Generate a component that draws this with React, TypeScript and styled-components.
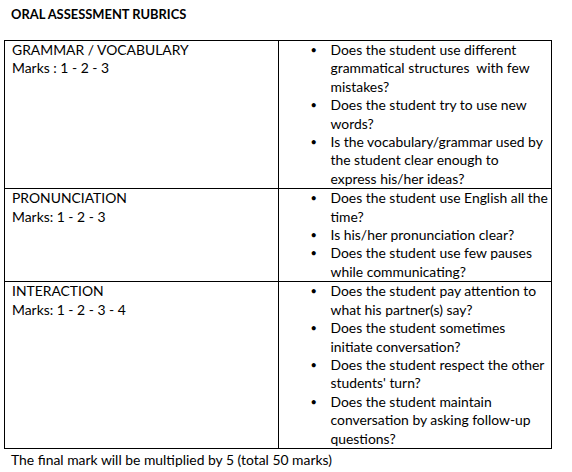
import * as React from "react"
import styled, { createGlobalStyle } from "styled-components"

const GlobalStyle = createGlobalStyle`
  body {
    margin: 0;
    background: #ffffff;
    color: #000000;
    font-family: Lato, "Open Sans", sans-serif;
  }
`

const Page = styled.div`
  padding: 6px 20px 0 4px;
  font-size: 13.9px;
`

const Title = styled.h1`
  margin: 0 0 18px 7px;
  font-size: 12.9px;
  font-weight: 700;
  line-height: 16px;
`

const Table = styled.table`
  width: 548px;
  border-collapse: collapse;
  table-layout: fixed;
`

const Cell = styled.td`
  border: 1px solid #000;
  vertical-align: top;
  padding: 0 4px 0 7px;
  line-height: 18.4px;
`

const Criteria = styled.ul`
  margin: 0;
  padding: 0 0 0 45px;
  list-style: none;
`

const Item = styled.li`
  position: relative;

  &::before {
    content: "•";
    position: absolute;
    left: -20px;
    font-size: 11px;
  }
`

// lines are kept as in the printed rubric
const Line = styled.span`
  display: block;
  white-space: pre;
`

const Footer = styled.p`
  margin: 2px 0 0 7px;
  line-height: 18px;
`

const rubric = [
  {
    name: "GRAMMAR / VOCABULARY",
    marks: "Marks : 1 - 2 - 3",
    questions: [
      ["Does the student use different", "grammatical structures  with few", "mistakes?"],
      ["Does the student try to use new", "words?"],
      ["Is the vocabulary/grammar used by", "the student clear enough to", "express his/her ideas?"],
    ],
  },
  {
    name: "PRONUNCIATION",
    marks: "Marks: 1 - 2 - 3",
    questions: [
      ["Does the student use English all the", "time?"],
      ["Is his/her pronunciation clear?"],
      ["Does the student use few pauses", "while communicating?"],
    ],
  },
  {
    name: "INTERACTION",
    marks: "Marks: 1 - 2 - 3 - 4",
    questions: [
      ["Does the student pay attention to", "what his partner(s) say?"],
      ["Does the student sometimes", "initiate conversation?"],
      ["Does the student respect the other", "students' turn?"],
      ["Does the student maintain", "conversation by asking follow-up", "questions?"],
    ],
  },
]

export default function App() {
  return (
    <Page>
      <GlobalStyle />
      <Title>ORAL ASSESSMENT RUBRICS</Title>
      <Table>
        <tbody>
          {rubric.map((row) => (
            <tr key={row.name}>
              <Cell>
                {row.name}
                <br />
                {row.marks}
              </Cell>
              <Cell>
                <Criteria>
                  {row.questions.map((q) => (
                    <Item key={q[0]}>
                      {q.map((line) => (
                        <Line key={line}>{line}</Line>
                      ))}
                    </Item>
                  ))}
                </Criteria>
              </Cell>
            </tr>
          ))}
        </tbody>
      </Table>
      <Footer>The final mark will be multiplied by 5 (total 50 marks)</Footer>
    </Page>
  )
}
